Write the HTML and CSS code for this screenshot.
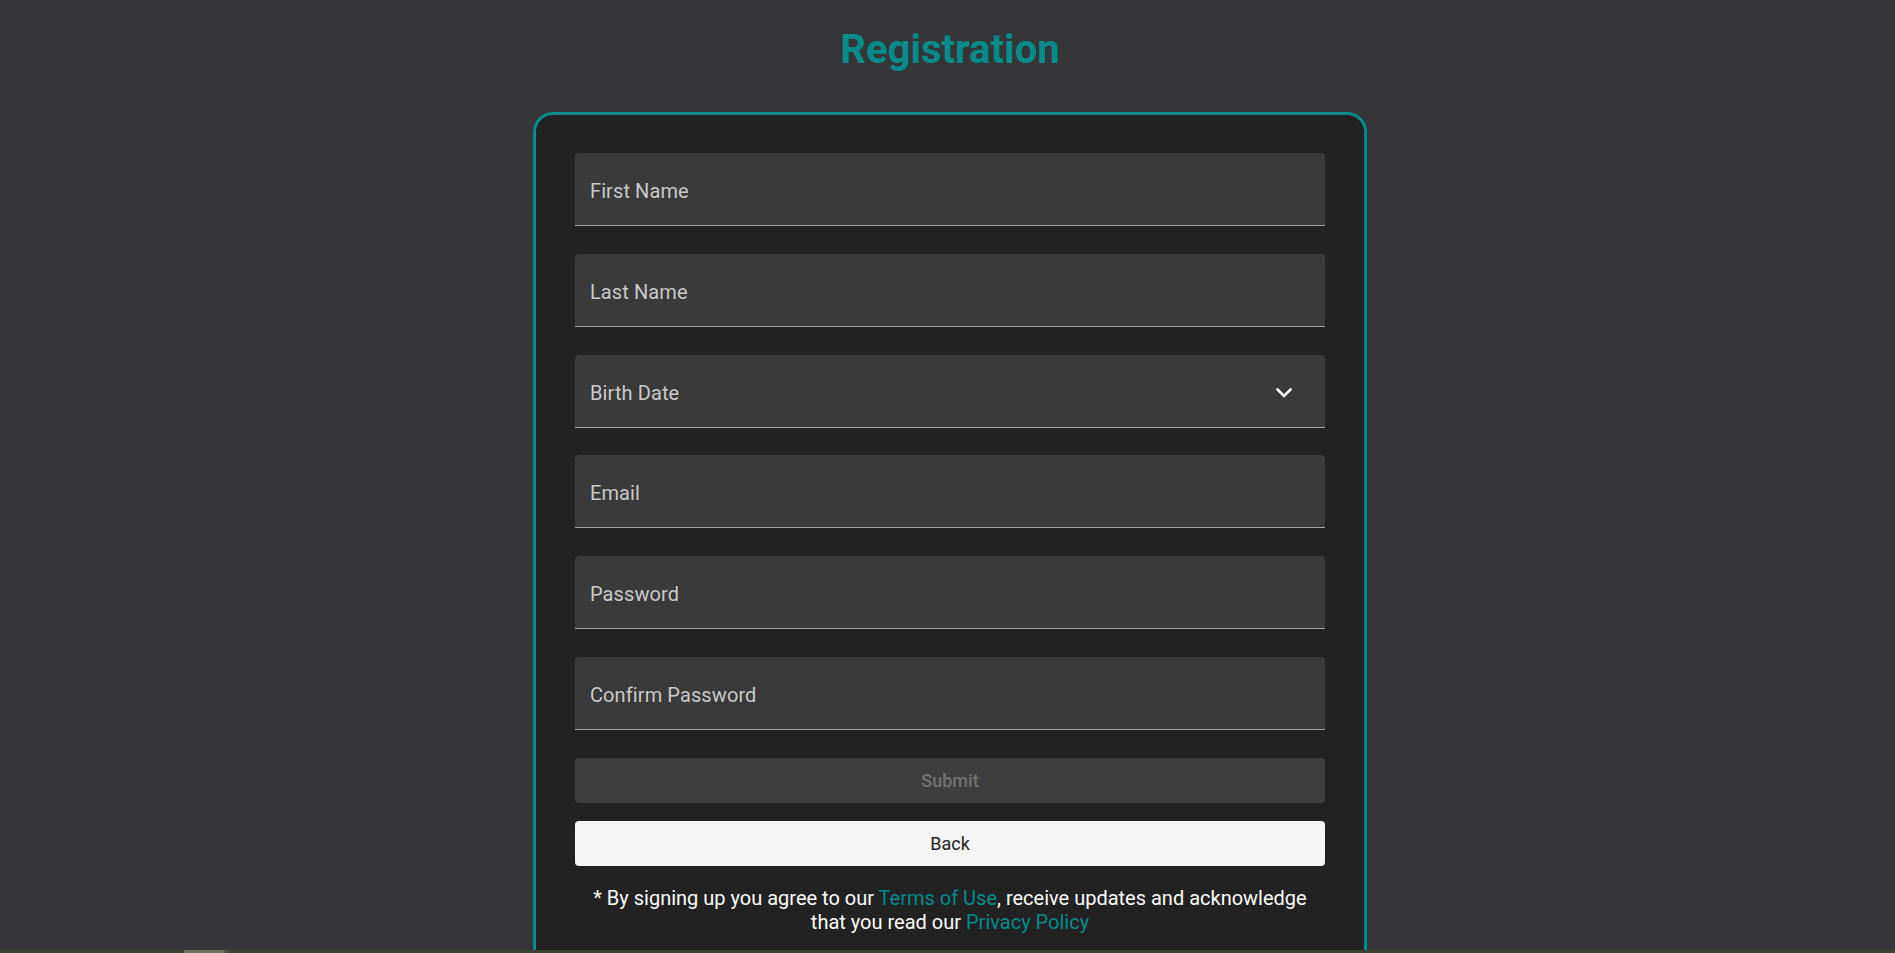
FILE: index.html
```html
<!DOCTYPE html>
<html lang="en">
<head>
<meta charset="utf-8">
<title>Registration</title>
<link rel="stylesheet" href="styles.css">
</head>
<body>
<main class="page">
  <h1 class="title">Registration</h1>
  <form class="card">
    <div class="field"><span class="label">First Name</span></div>
    <div class="field"><span class="label">Last Name</span></div>
    <div class="field select">
      <span class="label">Birth Date</span>
      <svg class="chevron" width="18" height="12" viewBox="0 0 18 12" aria-hidden="true">
        <path d="M2.5 2.5 L9 9 L15.5 2.5" fill="none" stroke="#fff" stroke-width="2.6" stroke-linecap="square"/>
      </svg>
    </div>
    <div class="field"><span class="label">Email</span></div>
    <div class="field"><span class="label">Password</span></div>
    <div class="field"><span class="label">Confirm Password</span></div>
    <button type="button" class="btn submit" disabled>Submit</button>
    <button type="button" class="btn back">Back</button>
    <p class="terms">* By signing up you agree to our <a href="#">Terms of Use</a>, receive updates and acknowledge that you read our <a href="#">Privacy Policy</a></p>
  </form>
</main>
<div class="hscroll"><div class="thumb"></div><div class="thumb-end"></div></div>
</body>
</html>
```
FILE: styles.css
```css
html, body {
  margin: 0;
  padding: 0;
  background: #363638;
  font-family: Roboto, "Liberation Sans", sans-serif;
}

.page {
  display: flex;
  flex-direction: column;
  align-items: center;
  padding-left: 5px;
}

.title {
  margin: 26px 0 39px;
  font-size: 40px;
  line-height: 47px;
  font-weight: 700;
  color: #008b8b;
}

.card {
  box-sizing: border-box;
  width: 834px;
  background: #222222;
  border: 3px solid #008b8b;
  border-radius: 20px;
  padding: 38px 39px 40px;
  display: flex;
  flex-direction: column;
}

.field {
  box-sizing: border-box;
  height: 73px;
  background: #3a3a3a;
  border-radius: 4px 4px 0 0;
  border-bottom: 1px solid #a3a3a3;
  margin-bottom: 27.8px;
  padding: 0 15px;
  display: flex;
  align-items: center;
  justify-content: space-between;
}

.label {
  font-size: 20px;
  color: #c9c9c9;
  letter-spacing: 0.1px;
  position: relative;
  top: 2px;
}

.chevron {
  margin-right: 17px;
  margin-top: 4px;
}

.btn {
  box-sizing: border-box;
  height: 45px;
  border: none;
  border-radius: 4px;
  font-family: Roboto, "Liberation Sans", sans-serif;
  font-size: 18px;
  padding: 0;
}

.submit {
  margin-top: 0;
  background: #3e3e3e;
  color: #727272;
  font-weight: 500;
}

.back {
  margin-top: 18px;
  background: #f5f5f5;
  color: #222222;
  font-weight: 400;
}

.terms {
  margin: 20px 0 0;
  font-size: 20px;
  line-height: 24px;
  color: #ffffff;
  text-align: center;
  padding: 0 10px;
}

.terms a {
  color: #008b8b;
  text-decoration: none;
}

.hscroll {
  position: fixed;
  left: 0;
  right: 0;
  bottom: 0;
  height: 3px;
  background: #3a4430;
}

.thumb {
  position: absolute;
  left: 184px;
  top: 0;
  width: 40px;
  height: 3px;
  background: #6d735f;
}

.thumb-end {
  position: absolute;
  left: 224px;
  top: 0;
  width: 5px;
  height: 3px;
  background: #4d4f48;
}
```
